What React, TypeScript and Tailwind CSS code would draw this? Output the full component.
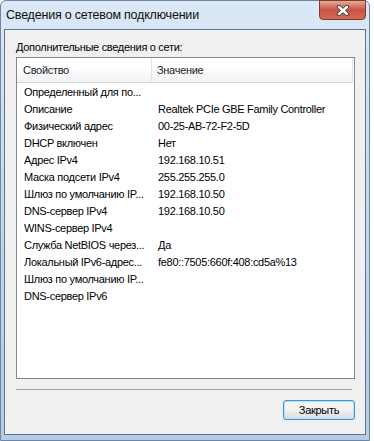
import React from "react";

const rows: [string, string][] = [
  ["Определенный для по...", ""],
  ["Описание", "Realtek PCIe GBE Family Controller"],
  ["Физический адрес", "00-25-AB-72-F2-5D"],
  ["DHCP включен", "Нет"],
  ["Адрес IPv4", "192.168.10.51"],
  ["Маска подсети IPv4", "255.255.255.0"],
  ["Шлюз по умолчанию IP...", "192.168.10.50"],
  ["DNS-сервер IPv4", "192.168.10.50"],
  ["WINS-сервер IPv4", ""],
  ["Служба NetBIOS через...", "Да"],
  ["Локальный IPv6-адрес...", "fe80::7505:660f:408:cd5a%13"],
  ["Шлюз по умолчанию IP...", ""],
  ["DNS-сервер IPv6", ""],
];

function CloseGlyph() {
  return (
    <svg width="14" height="11" viewBox="0 0 14 11">
      <path d="M3 2 L11 9 M11 2 L3 9" stroke="#4a3a3a" strokeWidth="4.2" strokeLinecap="round" />
      <path d="M3 2 L11 9 M11 2 L3 9" stroke="#ffffff" strokeWidth="2.4" strokeLinecap="round" />
    </svg>
  );
}

export default function App() {
  return (
    <div className="w-[374px] h-[441px] bg-white font-['Liberation_Sans',Arial,sans-serif] text-[11px] tracking-[-0.3px] text-black">
      <div className="relative w-[370px] h-[441px] flex flex-col rounded-t-[6px] border border-[#71859e] bg-gradient-to-b from-[#dbe8f6] via-[#c3d7ee] to-[#b4cce8] px-[3px] pb-[5px]">
        {/* caption */}
        <div className="h-[28px] flex items-center pl-[2px] text-[12.5px] text-[#101010] tracking-[-0.2px]">
          Сведения о сетевом подключении
        </div>
        <div className="absolute top-[-1px] right-[3px] w-[47px] h-[20px] rounded-b-[4px] border border-[#7d3a31] bg-gradient-to-b from-[#e8a998] via-[#c8523f] to-[#d46c56] flex items-center justify-center">
          <CloseGlyph />
        </div>

        {/* body */}
        <div className="flex-1 flex flex-col border border-[#5f7290] bg-[#f0f0f0] pl-[11px] pr-[10px] pt-[10px] pb-[14px]">
          <div className="h-[14px] leading-[14px] mb-[3px]">Дополнительные сведения о сети:</div>

          <div className="h-[322px] border border-[#828790] bg-white flex flex-col">
            <div className="h-[25px] flex border-b border-[#d5d5d5] bg-gradient-to-b from-white from-40% to-[#f1f2f4] mr-[1px] text-[#1a1a1a]">
              <div className="w-[135px] border-r border-[#e0e3e8] flex items-center pl-[6px]">Свойство</div>
              <div className="flex-1 flex items-center pl-[5px] border-r border-[#e0e3e8]">Значение</div>
            </div>
            <div className="pt-[1px] flex flex-col">
              {rows.map(([k, v], i) => (
                <div key={i} className="h-[17px] flex items-center">
                  <div className="w-[136px] pl-[7px] whitespace-nowrap">{k}</div>
                  <div className="pl-[5px] whitespace-nowrap">{v}</div>
                </div>
              ))}
            </div>
          </div>

          <div className="mt-[10px] w-[336px] h-px bg-[#a0a0a0]" />

          <div className="mt-[10px] flex justify-end">
            <button className="w-[72px] h-[20px] rounded-[3px] border border-[#3c94d4] bg-gradient-to-b from-[#f4f4f4] from-45% to-[#dcdcdc] shadow-[inset_0_0_0_1px_#b6e0f8] text-[11px] leading-none text-black">
              Закрыть
            </button>
          </div>
        </div>
      </div>
    </div>
  );
}
